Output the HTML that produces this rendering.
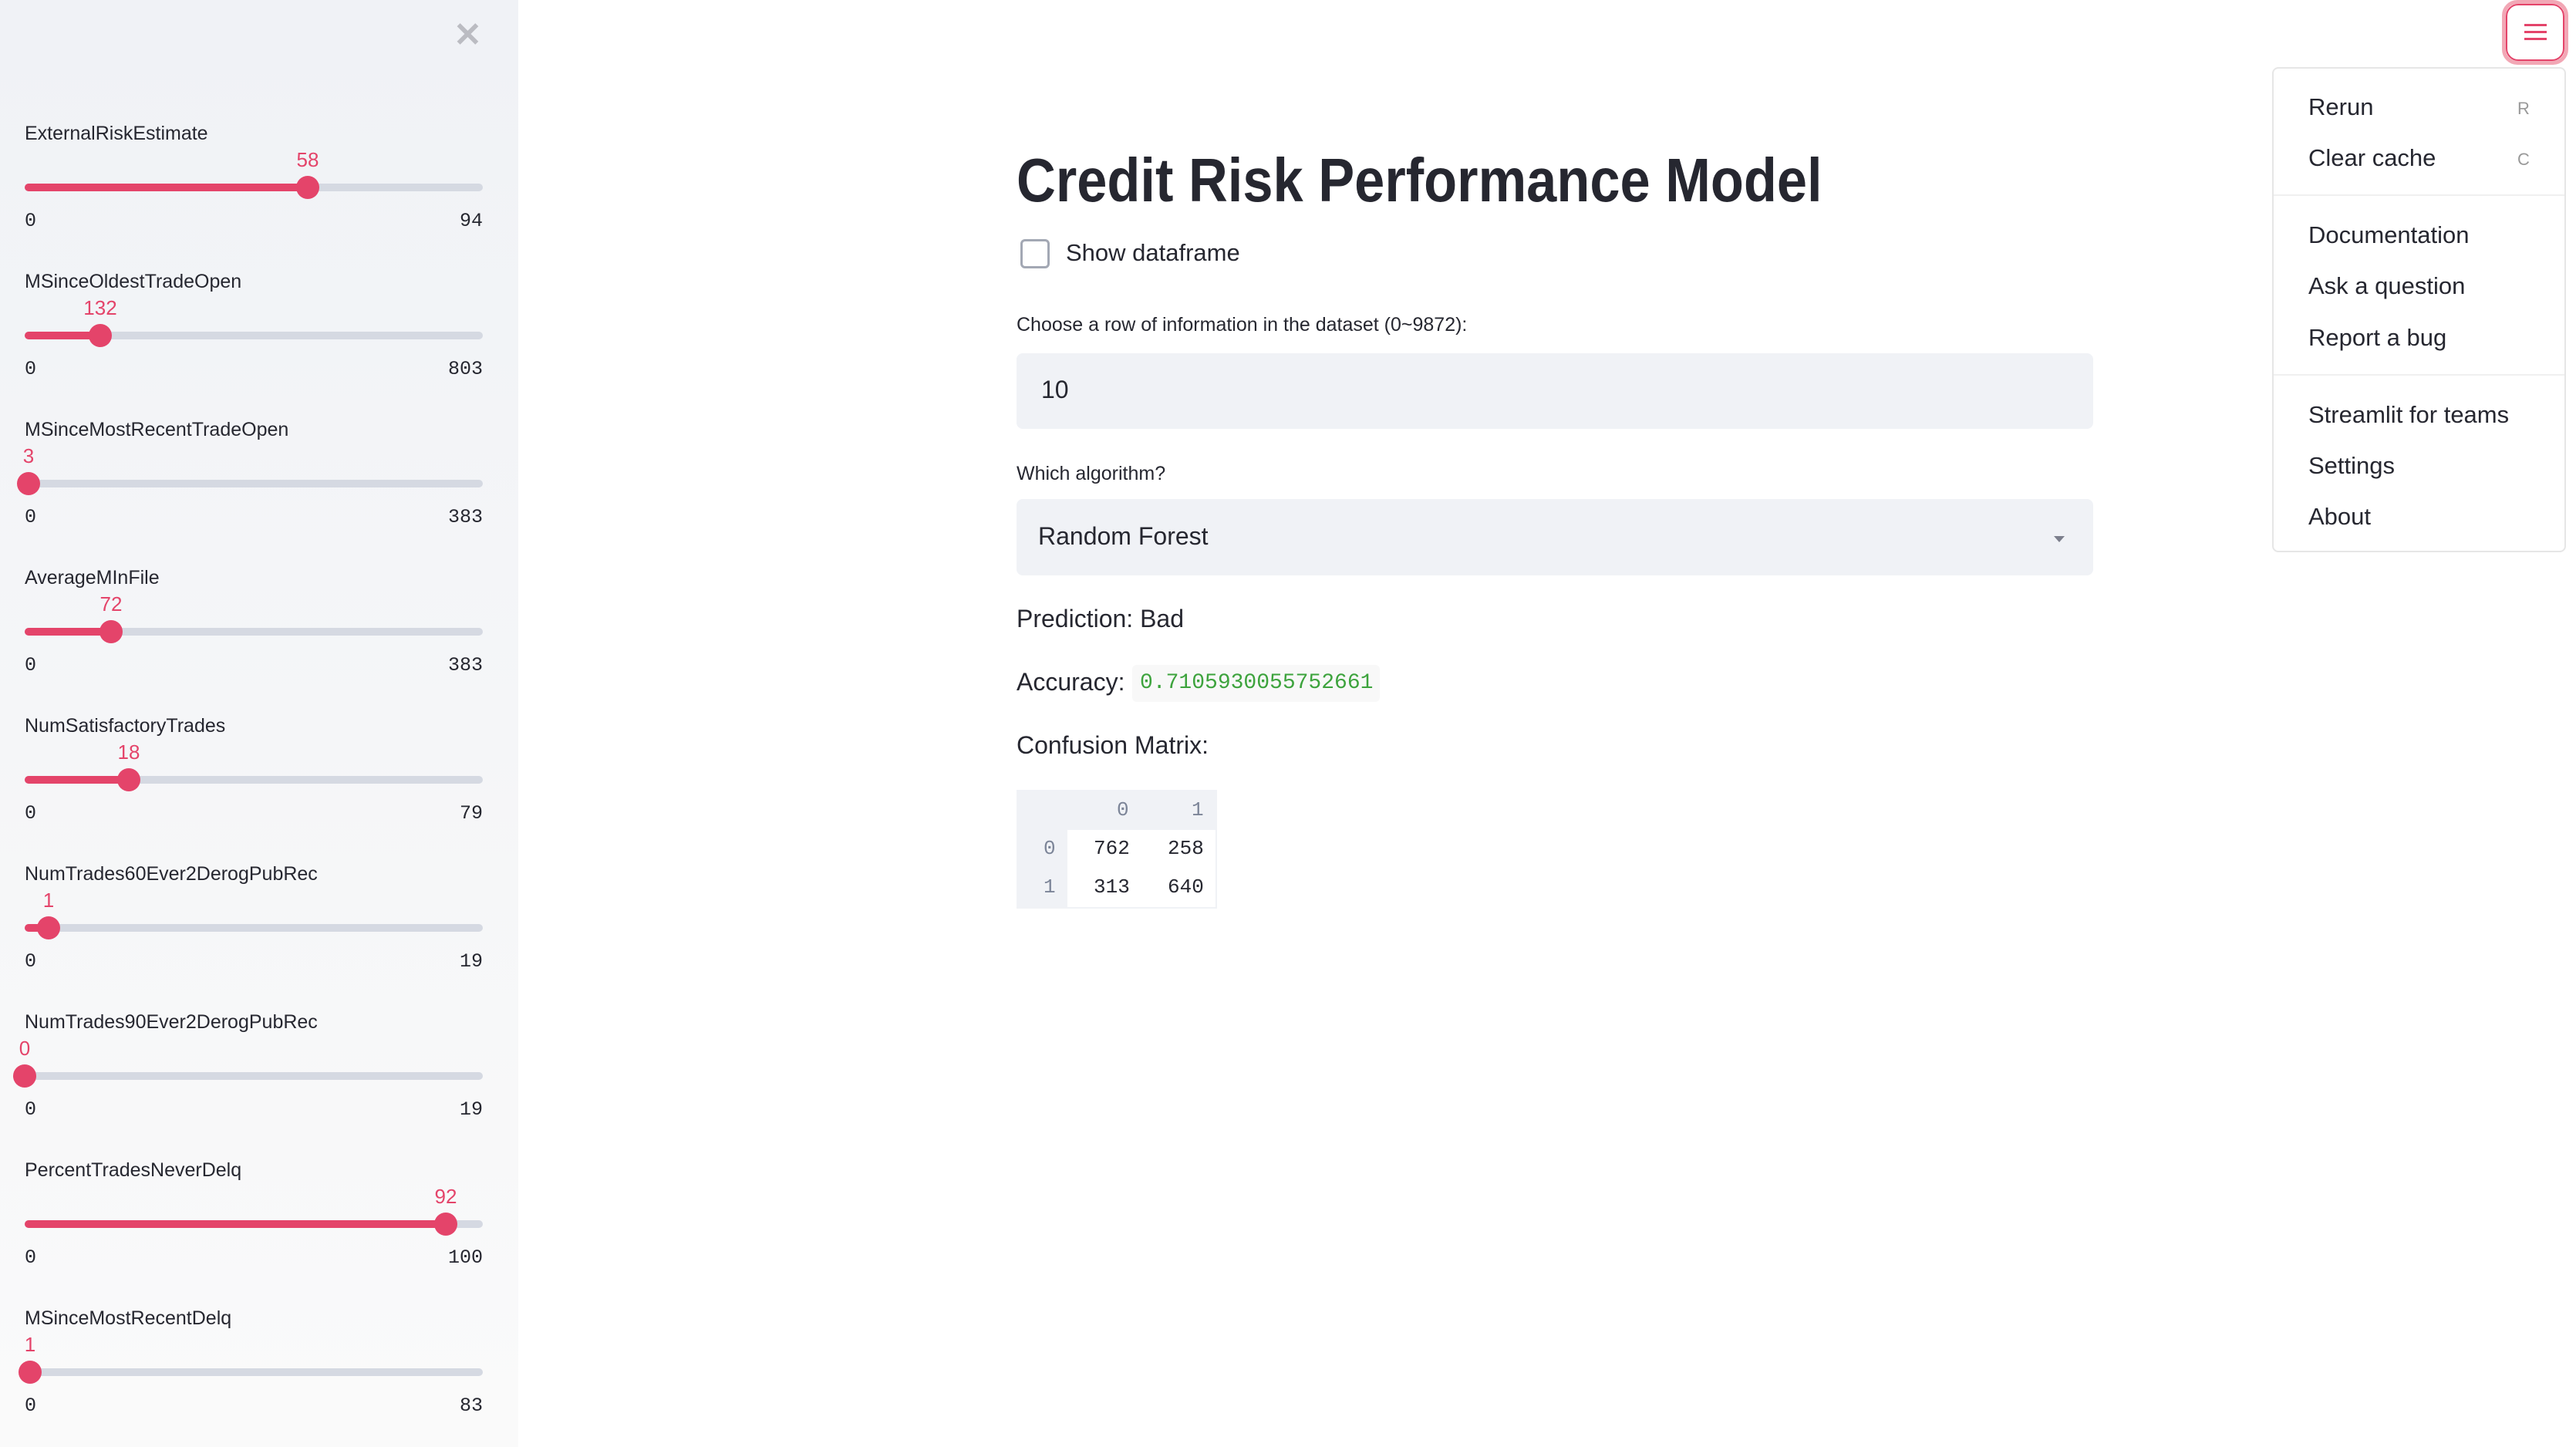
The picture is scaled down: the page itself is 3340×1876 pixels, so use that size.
<!DOCTYPE html>
<html><head><meta charset="utf-8">
<style>
*{margin:0;padding:0;box-sizing:border-box}
html,body{width:3340px;height:1876px;overflow:hidden;background:#fff;font-family:"Liberation Sans",sans-serif;color:#262730}
.sb{position:absolute;left:0;top:0;width:672px;height:1876px;background:linear-gradient(#f0f2f6,#fafafa)}
.abs{position:absolute;white-space:nowrap}
.lbl{font-size:25px;color:#262730}
.val{font-size:26px;color:#e4446a;font-family:"Liberation Sans",sans-serif}
.mm{font-family:"Liberation Mono",monospace;font-size:25px;color:#262730}
.track{position:absolute;left:32px;width:594px;height:10px;border-radius:5px;background:#d5d9e2}
.fill{position:absolute;left:0;top:0;height:10px;border-radius:5px;background:#e4446a}
.thumb{position:absolute;width:30px;height:30px;border-radius:50%;background:#e4446a;top:-10px}
.t{font-size:30px}
.menu{position:absolute;left:2946px;top:87px;width:381px;height:629px;border:2px solid #e6e6e6;border-radius:8px;background:#fff}
.mi{position:absolute;left:45px;font-size:31px;color:#262730;white-space:nowrap}
.sc{position:absolute;left:316px;font-size:22px;color:#999}
.div{position:absolute;left:0;width:100%;height:2px;background:#f0f0f0}
</style></head><body>
<div class="sb">
<div class="abs" style="left:588px;top:20px;font-size:44px;color:#bbbcc2;font-weight:bold">✕</div>
<div id="sl"></div>
</div>

<div class="abs" style="left:1318px;top:188px;font-size:80px;font-weight:bold;color:#262730;transform:scaleX(0.88);transform-origin:left top">Credit Risk Performance Model</div>

<div class="abs" style="left:1323px;top:310px;width:38px;height:38px;border:3px solid #a3a8b4;border-radius:6px"></div>
<div class="abs t" style="left:1382px;top:310px;font-size:31px">Show dataframe</div>

<div class="abs" style="left:1318px;top:407px;font-size:25px">Choose a row of information in the dataset (0~9872):</div>
<div class="abs" style="left:1318px;top:458px;width:1396px;height:98px;background:#f0f2f6;border-radius:8px"></div>
<div class="abs" style="left:1350px;top:487px;font-size:32px">10</div>

<div class="abs" style="left:1318px;top:600px;font-size:25px">Which algorithm?</div>
<div class="abs" style="left:1318px;top:647px;width:1396px;height:99px;background:#f0f2f6;border-radius:8px"></div>
<div class="abs" style="left:1346px;top:677px;font-size:32px">Random Forest</div>
<div class="abs" style="left:2663px;top:695px;width:0;height:0;border-left:7px solid transparent;border-right:7px solid transparent;border-top:8px solid #7c7f8c"></div>

<div class="abs" style="left:1318px;top:784px;font-size:32px">Prediction: Bad</div>
<div class="abs" style="left:1318px;top:866px;font-size:32px">Accuracy:</div>
<div class="abs" style="left:1468px;top:862px;width:321px;height:48px;background:#f8f8f8;border-radius:6px"></div>
<div class="abs" style="left:1478px;top:870px;font-family:'Liberation Mono',monospace;font-size:28px;color:#3da33d">0.7105930055752661</div>
<div class="abs" style="left:1318px;top:948px;font-size:32px">Confusion Matrix:</div>

<div class="abs" style="left:1318px;top:1024px;width:260px;height:154px;background:#f0f2f6"></div>
<div class="abs" style="left:1384px;top:1076px;width:192px;height:100px;background:#fff"></div>
<div class="abs" style="left:1448px;top:1035px;font-family:'Liberation Mono',monospace;font-size:26px;color:#7c8598">0</div>
<div class="abs" style="left:1545px;top:1035px;font-family:'Liberation Mono',monospace;font-size:26px;color:#7c8598">1</div>
<div class="abs" style="left:1353px;top:1085px;font-family:'Liberation Mono',monospace;font-size:26px;color:#7c8598">0</div>
<div class="abs" style="left:1353px;top:1135px;font-family:'Liberation Mono',monospace;font-size:26px;color:#7c8598">1</div>
<div class="abs" style="left:1418px;top:1085px;font-family:'Liberation Mono',monospace;font-size:26px">762</div>
<div class="abs" style="left:1514px;top:1085px;font-family:'Liberation Mono',monospace;font-size:26px">258</div>
<div class="abs" style="left:1418px;top:1135px;font-family:'Liberation Mono',monospace;font-size:26px">313</div>
<div class="abs" style="left:1514px;top:1135px;font-family:'Liberation Mono',monospace;font-size:26px">640</div>

<div class="abs" style="left:3244px;top:0;width:86px;height:84px;border:5px solid #f2a7b5;border-radius:20px"></div>
<div class="abs" style="left:3249px;top:5px;width:76px;height:74px;border:2px solid #e4446a;border-radius:16px"></div>
<div class="abs" style="left:3273px;top:31px;width:29px;height:3px;background:#e4446a"></div>
<div class="abs" style="left:3273px;top:40px;width:29px;height:3px;background:#e4446a"></div>
<div class="abs" style="left:3273px;top:49px;width:29px;height:3px;background:#e4446a"></div>

<div class="menu">
<div class="mi" style="top:32px">Rerun</div><div class="sc" style="top:39px">R</div>
<div class="mi" style="top:98px">Clear cache</div><div class="sc" style="top:105px">C</div>
<div class="div" style="top:163px"></div>
<div class="mi" style="top:198px">Documentation</div>
<div class="mi" style="top:264px">Ask a question</div>
<div class="mi" style="top:331px">Report a bug</div>
<div class="div" style="top:396px"></div>
<div class="mi" style="top:431px">Streamlit for teams</div>
<div class="mi" style="top:497px">Settings</div>
<div class="mi" style="top:563px">About</div>
</div>

<script>
var d=[["ExternalRiskEstimate",58,0,94],["MSinceOldestTradeOpen",132,0,803],["MSinceMostRecentTradeOpen",3,0,383],["AverageMInFile",72,0,383],["NumSatisfactoryTrades",18,0,79],["NumTrades60Ever2DerogPubRec",1,0,19],["NumTrades90Ever2DerogPubRec",0,0,19],["PercentTradesNeverDelq",92,0,100],["MSinceMostRecentDelq",1,0,83]];
var h="";
d.forEach(function(r,i){var y=i*192;var f=(r[1]-r[2])/(r[3]-r[2]);var px=Math.round(f*594);
h+='<div class="abs lbl" style="left:32px;top:'+(159+y)+'px">'+r[0]+'</div>';
h+='<div class="abs val" style="left:'+(32+px)+'px;top:'+(192+y)+'px;transform:translateX(-50%)">'+r[1]+'</div>';
h+='<div class="track" style="top:'+(238+y)+'px"><div class="fill" style="width:'+px+'px"></div><div class="thumb" style="left:'+(px-15)+'px"></div></div>';
h+='<div class="abs mm" style="left:32px;top:'+(272+y)+'px">'+r[2]+'</div>';
h+='<div class="abs mm" style="right:46px;top:'+(272+y)+'px">'+r[3]+'</div>';});
document.getElementById("sl").innerHTML=h;
</script>
</body></html>
